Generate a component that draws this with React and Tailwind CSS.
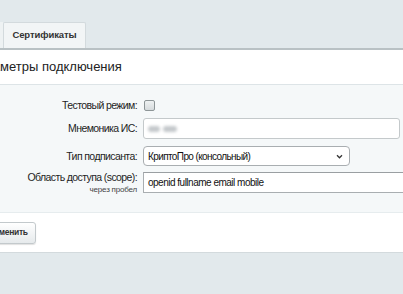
import React from 'react';

const font = { fontFamily: '"Liberation Sans", Arial, sans-serif' };

function Row({ label, hint, children, className = '' }) {
  return (
    <div className={`flex items-center ${className}`}>
      <div className="w-[138px] shrink-0 pr-[1px] text-right leading-none">
        <div className="text-[10.5px] tracking-[-0.6px] text-[#1e1e1e]">{label}</div>
        {hint && <div className="mt-[3px] text-[8px] tracking-[-0.2px] text-[#444]">{hint}</div>}
      </div>
      <div className="ml-[5px] flex-1 min-w-0">{children}</div>
    </div>
  );
}

export default function App() {
  return (
    <div className="h-[294px] w-full overflow-hidden bg-[#e2e9ec]" style={font}>
      {/* tabs */}
      <div className="flex h-[48px] items-end pt-[22px]">
        <div className="h-[26px] w-[3px] bg-[#eef2f3]" />
        <div className="flex h-[26px] w-[83px] items-center justify-center rounded-t-[2px] border border-b-0 border-[#d3dadd] bg-[#f2f5f6] text-[9.5px] font-bold tracking-[-0.1px] text-[#333]">
          Сертификаты
        </div>
      </div>

      {/* panel */}
      <div className="border-t-2 border-[#b9c1c4] bg-white">
        <div className="flex h-[35px] items-center border-b border-[#dde4e7]">
          <span className="-ml-[31px] text-[13px] text-[#222]">Параметры подключения</span>
        </div>

        <div className="flex h-[127px] flex-col bg-[#f5f8f9] pt-[14px]">
          <Row label="Тестовый режим:" className="h-[12px]">
            <div className="ml-[1px] h-[11px] w-[11px] rounded-[2px] border border-[#8d9597] bg-gradient-to-b from-[#eef1f2] to-[#d6dbdd]" />
          </Row>
          <Row label="Мнемоника ИС:" className="mt-[7px]">
            <div className="flex h-[21px] w-[257px] items-center gap-[3px] rounded-[3px] border border-[#c4c9cb] bg-white px-[4px]">
              <div className="h-[6px] w-[12px] rounded-full bg-[#c4c8cb] blur-[1.5px]" />
              <div className="h-[6px] w-[14px] rounded-full bg-[#c4c8cb] blur-[1.5px]" />
            </div>
          </Row>
          <Row label="Тип подписанта:" className="mt-[7px]">
            <div className="flex h-[20px] w-[207px] items-center justify-between rounded-[4px] border border-[#a9aeb1] bg-white pl-[4px] pr-[6px] text-[10px] tracking-[-0.6px] text-[#111]">
              <span>КриптоПро (консольный)</span>
              <svg width="7" height="5" viewBox="0 0 8 6" fill="none">
                <path d="M1 1.5L4 4.5L7 1.5" stroke="#333" strokeWidth="1.5" />
              </svg>
            </div>
          </Row>
          <Row label="Область доступа (scope):" hint="через пробел" className="mt-[6px]">
            <div className="flex h-[21px] w-[300px] items-center border border-[#a9aeb1] border-t-[#9a9fa2] bg-white px-[4px] text-[10px] tracking-[-0.5px] text-[#111]">
              openid fullname email mobile
            </div>
          </Row>
        </div>

        <div className="flex h-[40px] items-center border-t border-[#e6ecee]">
          <div className="-ml-[25px] flex h-[22px] w-[61px] items-center justify-center rounded-[3px] border border-[#c3c9cc] bg-gradient-to-b from-white to-[#e6eaec] text-[8.5px] font-bold tracking-[-0.3px] text-[#333] shadow-[0_1px_1px_rgba(0,0,0,0.12)]">
            Применить
          </div>
        </div>
      </div>
      <div className="border-t border-[#d3dadd]" />
    </div>
  );
}
